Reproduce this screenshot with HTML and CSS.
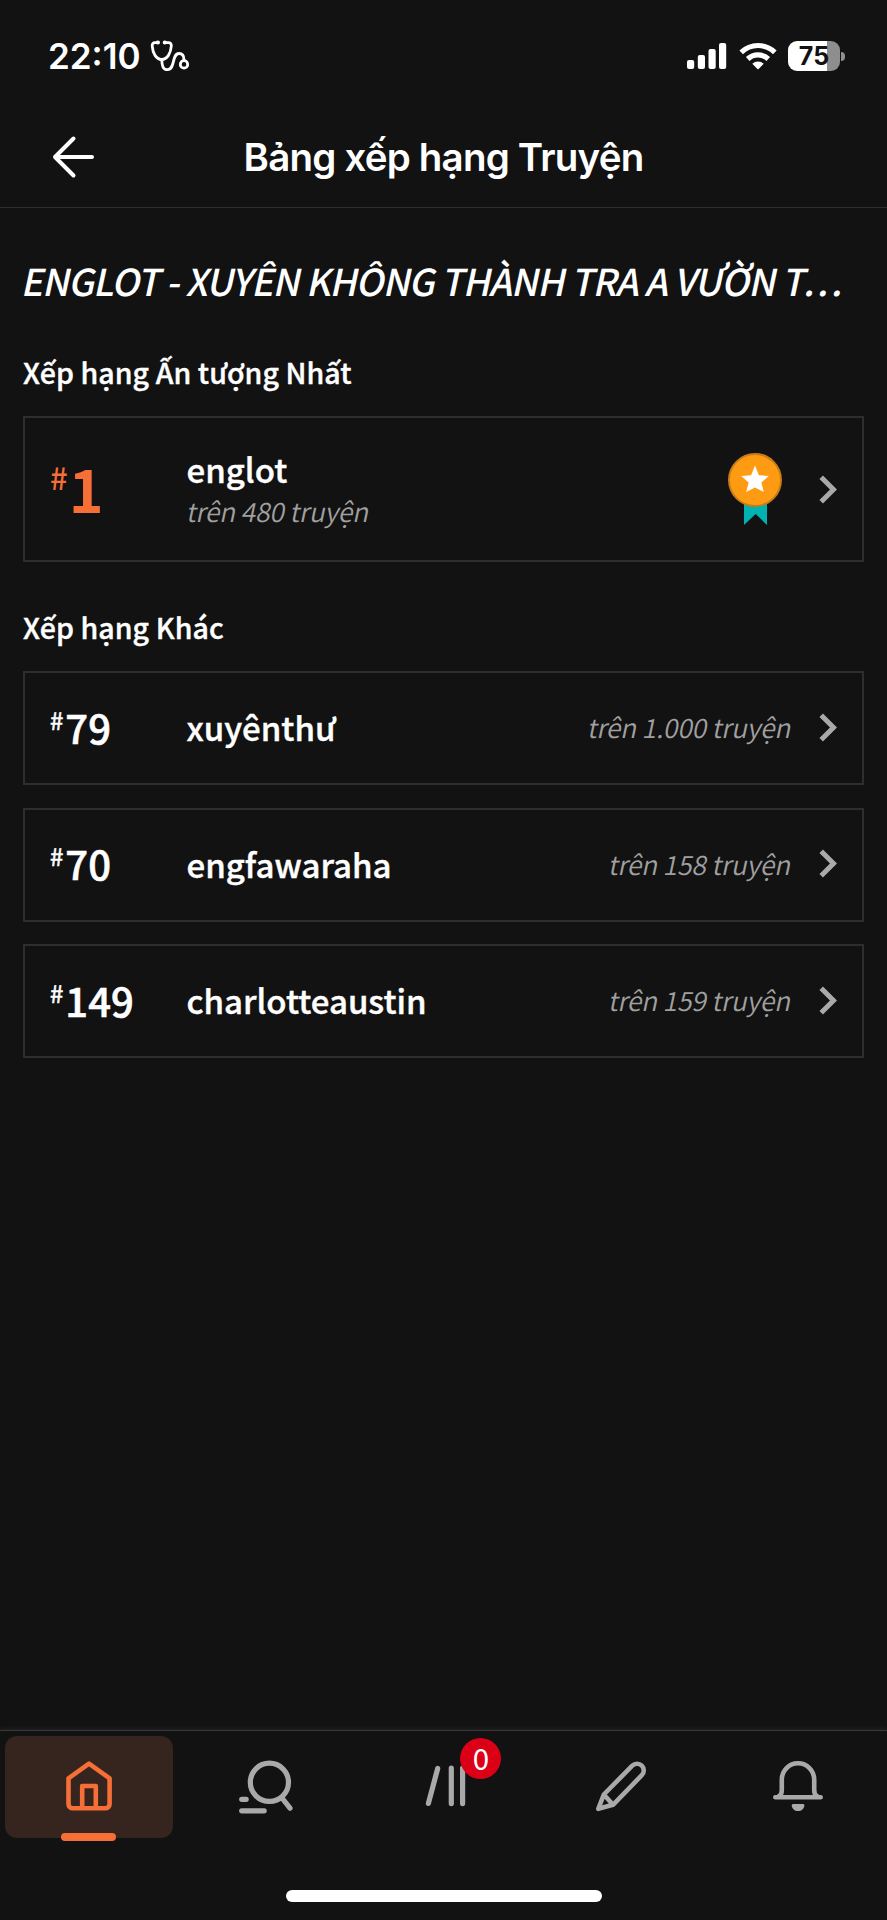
FILE: index.html
```html
<!DOCTYPE html>
<html lang="vi">
<head>
  <meta charset="UTF-8">
  <meta name="viewport" content="width=device-width, initial-scale=1.0">
  <title>Bảng xếp hạng Truyện</title>
  <link rel="stylesheet" href="styles.css">
</head>
<body>
  <div class="status-bar">
    <span class="time">22:10</span>
    <svg class="stethoscope" width="42" height="34" viewBox="0 0 42 34" fill="none" stroke="#fff" stroke-width="2.8" stroke-linecap="round" stroke-linejoin="round">
      <path d="M9.5 3.7H7C5 3.7 4 5 4.2 7C4.8 14 8 20.5 13.7 20.5S22.8 14 23.3 7C23.5 5 22.5 3.7 20.5 3.7H17"/>
      <path d="M13.7 20.5C14 27 15 30.7 19.5 30.7C27.5 30.7 23.5 14.5 31 14.5C34.5 14.5 36 17 36 21"/>
      <circle cx="36" cy="25.4" r="3.7"/>
      <path d="M9.7 3.6h.3M16.7 3.6h.3" stroke-width="4"/>
    </svg>
    <div class="status-icons">
      <svg width="40" height="28" viewBox="0 0 40 28" fill="#fff">
        <rect x="0" y="18" width="7.2" height="9" rx="2"/>
        <rect x="10.8" y="13" width="7.2" height="14" rx="2"/>
        <rect x="21.5" y="7" width="7.2" height="20" rx="2"/>
        <rect x="32" y="1" width="7.2" height="26" rx="2"/>
      </svg>
      <svg class="wifi" width="38" height="28" viewBox="0 0 38 28">
        <g fill="none" stroke="#fff" stroke-width="5.2">
          <path d="M2.2 10.3a24.2 24.2 0 0 1 33.6 0"/>
          <path d="M8.7 17a15 15 0 0 1 20.6 0"/>
        </g>
        <path d="M13.3 21.8a8.3 8.3 0 0 1 11.4 0L19.6 27q-.6.5-1.2 0z" fill="#fff"/>
      </svg>
      <div class="battery"><span>75</span></div>
      <div class="battery-tip"></div>
    </div>
  </div>

  <header class="header">
    <svg class="back" width="44" height="44" viewBox="0 0 44 44" fill="none" stroke="#fff" stroke-width="4" stroke-linecap="round" stroke-linejoin="round">
      <path d="M22.5 3.5L4 22L22.5 40.5M4 22H41"/>
    </svg>
    <div class="header-title">Bảng xếp hạng Truyện</div>
  </header>

  <main class="content">
    <h1>ENGLOT - XUYÊN KHÔNG THÀNH TRA A VƯỜN T<span class="dots">...</span></h1>

    <h2>Xếp hạng Ấn tượng Nhất</h2>
    <div class="card card-top">
      <div class="rank"><span class="hash">#</span>1</div>
      <div class="info">
        <div class="name">englot</div>
        <div class="total">trên 480 truyện</div>
      </div>
      <svg class="medal" width="56" height="74" viewBox="0 0 56 74">
        <path d="M17 45h23v28L28.7 62L17 73z" fill="#00b2b2"/>
        <circle cx="28" cy="28" r="26" fill="#ff9b12" stroke="#c77c17" stroke-width="2"/>
        <path d="M28 13.5l3.9 9.7 9.9.8-7.4 6.6 2.4 9.4-8.8-4.6-8.8 4.6 2.4-9.4-7.4-6.6 9.9-.8z" fill="#fff"/>
      </svg>
      <svg class="chevron" width="18" height="29" viewBox="0 0 18 29"><path d="M2.2 2.2L14.5 14.5L2.2 26.8"/></svg>
    </div>

    <h2>Xếp hạng Khác</h2>
    <div class="list">
      <div class="card">
        <div class="rank"><span class="hash">#</span>79</div>
        <div class="name">xuyênthư</div>
        <div class="total">trên 1.000 truyện</div>
        <svg class="chevron" width="18" height="29" viewBox="0 0 18 29"><path d="M2.2 2.2L14.5 14.5L2.2 26.8"/></svg>
      </div>
      <div class="card">
        <div class="rank"><span class="hash">#</span>70</div>
        <div class="name">engfawaraha</div>
        <div class="total">trên 158 truyện</div>
        <svg class="chevron" width="18" height="29" viewBox="0 0 18 29"><path d="M2.2 2.2L14.5 14.5L2.2 26.8"/></svg>
      </div>
      <div class="card">
        <div class="rank"><span class="hash">#</span>149</div>
        <div class="name">charlotteaustin</div>
        <div class="total">trên 159 truyện</div>
        <svg class="chevron" width="18" height="29" viewBox="0 0 18 29"><path d="M2.2 2.2L14.5 14.5L2.2 26.8"/></svg>
      </div>
    </div>
  </main>

  <nav class="tabs">
    <div class="tab active">
      <svg width="60" height="60" viewBox="0 0 60 60" stroke-width="4.6" stroke-linejoin="round">
        <path d="M30 7.7L50.6 22.3V48a4.3 4.3 0 0 1-4.3 4.3H13.8A4.3 4.3 0 0 1 9.5 48V22.3Z"/>
        <path d="M23.2 52V30H36.8V52"/>
      </svg>
    </div>
    <div class="tab">
      <svg width="60" height="60" viewBox="0 0 60 60" stroke-width="5.2" stroke-linecap="round">
        <circle cx="33.4" cy="26.3" r="19.1"/>
        <path d="M46 42L54 52.2M5.7 43.3H10.2M5.7 54.8H28.2"/>
      </svg>
    </div>
    <div class="tab">
      <svg width="60" height="60" viewBox="0 0 60 60" stroke-width="5.2" stroke-linecap="round">
        <path d="M23.7 12.5L14.4 47.4M37.3 12V47.6M48.6 12V47.6"/>
      </svg>
      <span class="badge">0</span>
    </div>
    <div class="tab">
      <svg width="60" height="60" viewBox="0 0 60 60" stroke-width="4.6" stroke-linejoin="round">
        <path d="M12.8 38.5L41.3 9.7A6.7 6.7 0 0 1 50.8 19.2L22 48.8L7.3 52.8ZM12.8 38.5L22 48.8"/>
      </svg>
    </div>
    <div class="tab">
      <svg width="60" height="60" viewBox="0 0 60 60" stroke-width="4.6" stroke-linecap="round">
        <path d="M11 40C13 39 13.8 37 13.8 34V23.5A16.2 16.2 0 0 1 46.2 23.5V34C46.2 37 47 39 49 40M7.3 41.3H52.7"/>
        <path class="solid" d="M25 48H35.2Q36.5 48 36.4 49.5C36 53 33.5 55 30 55S24.2 53 23.7 49.5Q23.7 48 25 48Z"/>
      </svg>
    </div>
  </nav>
  <div class="home-bar"></div>
</body>
</html>
```
FILE: styles.css
```css
* {
  box-sizing: border-box;
}
body {
  margin: 0;
  height: 1920px;
  display: flex;
  flex-direction: column;
  background: #121212;
  color: #fff;
  font-family: "Noto Sans CJK JP", "Noto Sans CJK SC", "Noto Sans", sans-serif;
  overflow: hidden;
}
svg {
  display: block;
  flex: none;
}

/* status bar */
.status-bar {
  height: 106px;
  padding: 6px 42px 0 48px;
  display: flex;
  align-items: center;
  font-family: Inter, sans-serif;
}
.time {
  width: 100px;
  font-size: 35px;
  font-weight: 600;
}
.status-icons {
  margin-left: auto;
  display: flex;
  align-items: center;
}
.wifi {
  margin: 0 11px 0 12px;
}
.battery {
  width: 52px;
  height: 30px;
  border-radius: 9px;
  background: linear-gradient(to right, #fff 39px, #8e8e8e 39px);
  color: #121212;
  font-size: 25px;
  font-weight: 700;
  line-height: 30px;
  text-align: center;
}
.battery-tip {
  width: 4px;
  height: 9px;
  margin-left: 1px;
  border-radius: 0 4px 4px 0;
  background: #8e8e8e;
}

/* header */
.header {
  height: 102px;
  padding: 0 51px;
  display: flex;
  align-items: center;
  border-bottom: 1px solid #2e2e2e;
}
.header-title {
  flex: 1;
  margin-right: 44px;
  text-align: center;
  font: 600 38.5px/48px Inter, sans-serif;
  letter-spacing: -0.8px;
  white-space: nowrap;
}

/* rankings */
.content {
  flex: 1;
  padding: 48px 23px 0;
}
h1 {
  margin: 0 0 0 1px;
  font-size: 37px;
  font-weight: 500;
  line-height: 48px;
  letter-spacing: -1.02px;
  white-space: nowrap;
  transform: skewX(-12deg);
}
.dots {
  letter-spacing: 2.8px;
}
h2 {
  margin: 48px 0 24px;
  font-size: 28.5px;
  font-weight: 500;
  line-height: 40px;
  letter-spacing: 0.08px;
  -webkit-text-stroke: 0.4px;
}
.card {
  height: 114px;
  padding: 0 25px 2px 26px;
  display: flex;
  align-items: center;
  border: 2px solid #2e2e2e;
}
.card-top {
  height: 146px;
  padding-bottom: 0;
}
.card-top + h2 {
  margin-top: 45px;
}
.list {
  display: flex;
  flex-direction: column;
  gap: 22.5px;
}
.rank {
  width: 136.5px;
  margin-left: -1px;
  display: flex;
  font-size: 40px;
  font-weight: 500;
  line-height: 59px;
  -webkit-text-stroke: 0.6px;
}
.hash {
  margin-right: 2px;
  font-size: 24px;
  font-weight: 400;
  line-height: 43px;
}
.card-top .rank {
  padding-bottom: 4px;
  color: #f56f36;
  font-size: 59px;
  font-weight: 700;
  line-height: 75px;
  -webkit-text-stroke: 0;
}
.card-top .hash {
  margin-right: 1px;
  font-size: 31px;
  font-weight: 500;
  line-height: 53px;
}
.name {
  font-size: 33px;
  font-weight: 500;
  line-height: 42px;
  -webkit-text-stroke: 0.4px;
}
.total {
  margin-left: auto;
  color: #a0a0a0;
  font-size: 26.5px;
  font-weight: 350;
  line-height: 36px;
  letter-spacing: -0.22px;
  transform: skewX(-12deg);
}
.info .name {
  line-height: 43px;
}
.info .total {
  margin-left: 1px;
  line-height: 40px;
}
.medal {
  margin-left: auto;
}
.chevron {
  margin-left: 27px;
  fill: none;
  stroke: #a9a9a9;
  stroke-width: 5px;
}
.card-top .chevron {
  margin-left: 36px;
}

/* bottom tabs */
.tabs {
  display: flex;
  height: 150px;
  border-top: 1px solid #3a3a3a;
  box-shadow: 0 -2px 5px rgba(255, 255, 255, 0.06);
}
.tab {
  position: relative;
  flex: 1;
  height: 102px;
  margin: 5px 4.5px;
  padding-top: 20px;
  border-radius: 12px;
}
.tab svg {
  margin: 0 auto;
  fill: none;
  stroke: #a9a9a9;
}
.tab .solid {
  fill: #a9a9a9;
  stroke: none;
}
.tab.active {
  background: #36241e;
}
.tab.active svg {
  stroke: #f56f36;
}
.tab.active::after {
  content: "";
  position: absolute;
  left: 56px;
  bottom: -3px;
  width: 55px;
  height: 8px;
  border-radius: 4px;
  background: #f56f36;
}
.badge {
  position: absolute;
  top: 2px;
  left: 101px;
  width: 41px;
  height: 41px;
  border-radius: 50%;
  background: #dc0016;
  font-size: 29.5px;
  line-height: 39px;
  text-align: center;
}
.home-bar {
  width: 316px;
  height: 12px;
  margin: 10px auto 18px;
  border-radius: 6px;
  background: #fff;
}
```
